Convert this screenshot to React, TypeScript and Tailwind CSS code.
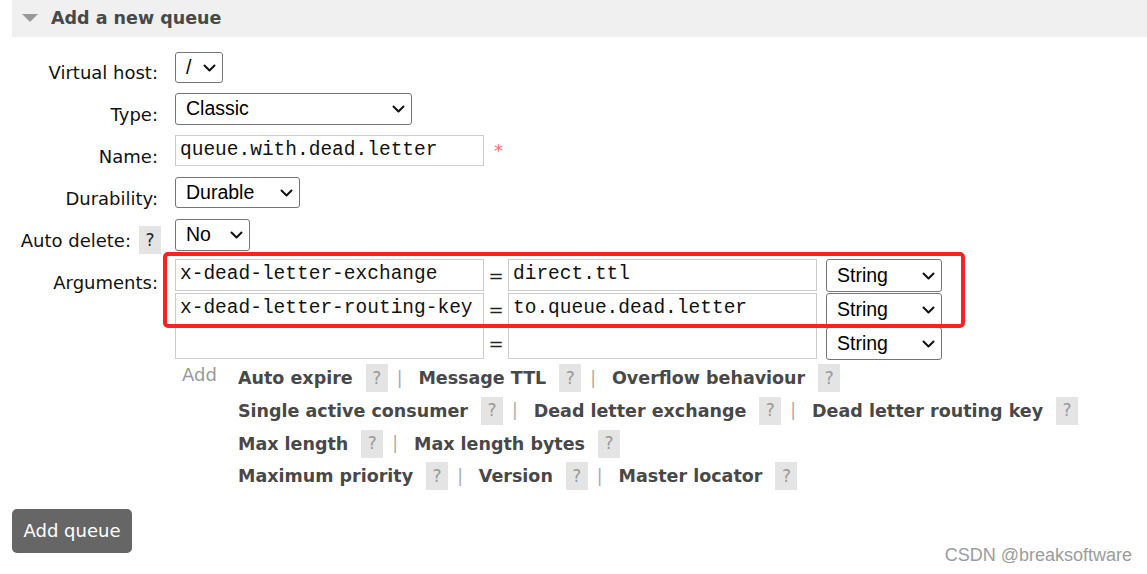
import React from 'react';

function Chevron() {
  return (
    <svg width="13" height="8" viewBox="0 0 13 8" fill="none">
      <path d="M1.5 1.5 L6.5 6.5 L11.5 1.5" stroke="#111" strokeWidth="2" strokeLinecap="round" strokeLinejoin="round" />
    </svg>
  );
}

function Select({ text, className }: { text: string; className: string }) {
  return (
    <div
      className={`flex shrink-0 items-center justify-between rounded-[3px] border border-[#767676] bg-white pr-[6px] pl-[10px] font-['Liberation_Sans',sans-serif] text-[19.5px] text-black ${className}`}
    >
      <span>{text}</span>
      <Chevron />
    </div>
  );
}

function Input({ text, className }: { text?: string; className: string }) {
  return (
    <div
      className={`flex shrink-0 items-center overflow-hidden border border-[#cccccc] bg-white pl-[4px] font-['Liberation_Mono',monospace] text-[19.5px] whitespace-nowrap text-[#111] ${className}`}
    >
      {text}
    </div>
  );
}

function Row({ label, className, children }: { label: React.ReactNode; className: string; children: React.ReactNode }) {
  return (
    <div className={`flex ${className}`}>
      <div className="flex h-0 w-[161px] shrink-0 items-start justify-end overflow-visible text-[18px] leading-[21px] whitespace-nowrap text-[#111]">
        {label}
      </div>
      <div className="ml-[14px]">{children}</div>
    </div>
  );
}

function Help({ dark }: { dark?: boolean }) {
  return (
    <span
      className={`flex h-[28px] w-[22px] items-center justify-center bg-[#e4e4e4] text-[17px] ${dark ? 'text-[#222]' : 'text-[#999]'}`}
    >
      ?
    </span>
  );
}

function ArgLine({ items }: { items: string[] }) {
  return (
    <div className="flex h-[32.7px] items-center whitespace-nowrap">
      {items.map((item, i) => (
        <React.Fragment key={item}>
          {i > 0 && <span className="mr-[16px] ml-[9px] text-[17px] text-[#aaaaaa]">|</span>}
          <span className="text-[17.5px] font-bold text-[#484848]">{item}</span>
          <span className="ml-[13px]">
            <Help />
          </span>
        </React.Fragment>
      ))}
    </div>
  );
}

function ArgRow({ k, v, className }: { k?: string; v?: string; className: string }) {
  return (
    <div className={`flex h-[32px] items-start ${className}`}>
      <Input text={k} className="h-[32px] w-[309px]" />
      <div className="flex h-[32px] w-[24px] items-center justify-center text-[18px] text-[#222]">=</div>
      <Input text={v} className="h-[32px] w-[309px]" />
      <Select text="String" className="ml-[9px] h-[33px] w-[116px]" />
    </div>
  );
}

export default function App() {
  return (
    <div className="relative h-[574px] w-[1147px] overflow-hidden bg-white font-['DejaVu_Sans',sans-serif]">
      <div className="ml-[12px] flex h-[37px] items-center bg-[#f0f0f0] pl-[10px]">
        <svg width="16" height="9" viewBox="0 0 16 9">
          <path d="M0 0 L16 0 L8 8 Z" fill="#999999" />
        </svg>
        <span className="ml-[13px] text-[17.5px] font-bold text-[#484848]">Add a new queue</span>
      </div>

      <div className="flex flex-col">
        <Row label={<span className="pt-[10px] pr-[3px]">Virtual host:</span>} className="mt-[15px] h-[31px]">
          <Select text="/" className="h-[31px] w-[48px]" />
        </Row>
        <Row label={<span className="pt-[11px] pr-[3px]">Type:</span>} className="mt-[10px] h-[32px]">
          <Select text="Classic" className="h-[32px] w-[237px]" />
        </Row>
        <Row label={<span className="pt-[11px] pr-[3px]">Name:</span>} className="mt-[10px] h-[31px]">
          <div className="flex items-start">
            <Input text="queue.with.dead.letter" className="h-[31px] w-[309px]" />
            <span className="ml-[10px] pt-[2px] text-[18px] text-[#ff7070]">*</span>
          </div>
        </Row>
        <Row label={<span className="pt-[11px] pr-[3px]">Durability:</span>} className="mt-[11px] h-[31px]">
          <Select text="Durable" className="h-[31px] w-[125px]" />
        </Row>
        <Row
          label={
            <span className="flex items-center gap-[8px] pt-[7px]">
              Auto delete:
              <Help dark />
            </span>
          }
          className="mt-[11px] h-[32px]"
        >
          <Select text="No" className="h-[32px] w-[75px]" />
        </Row>
        <Row label={<span className="pt-[13px] pr-[3px]">Arguments:</span>} className="mt-[8px]">
          <ArgRow k="x-dead-letter-exchange" v="direct.ttl" className="" />
          <ArgRow k="x-dead-letter-routing-key" v="to.queue.dead.letter" className="mt-[2px]" />
          <ArgRow className="mt-[2px]" />
          <div className="mt-[3px] flex">
            <span className="w-[63px] pl-[7px] text-[18px] leading-[25px] text-[#999999]">Add</span>
            <div className="flex flex-col">
              <ArgLine items={['Auto expire', 'Message TTL', 'Overflow behaviour']} />
              <ArgLine items={['Single active consumer', 'Dead letter exchange', 'Dead letter routing key']} />
              <ArgLine items={['Max length', 'Max length bytes']} />
              <ArgLine items={['Maximum priority', 'Version', 'Master locator']} />
            </div>
          </div>
        </Row>
        <div className="mt-[16px] ml-[12px] flex h-[44px] w-[120px] items-center justify-center rounded-[5px] bg-[#666666] text-[18px] text-white">
          Add queue
        </div>
      </div>

      <div className="absolute top-[252px] left-[163px] h-[76px] w-[802px] rounded-[5px] border-[4px] border-[#ff2020]" />
      <div className="absolute right-[15px] bottom-[5px] font-['Liberation_Sans',sans-serif] text-[18px] text-[#9c9c9c]">
        CSDN @breaksoftware
      </div>
    </div>
  );
}
